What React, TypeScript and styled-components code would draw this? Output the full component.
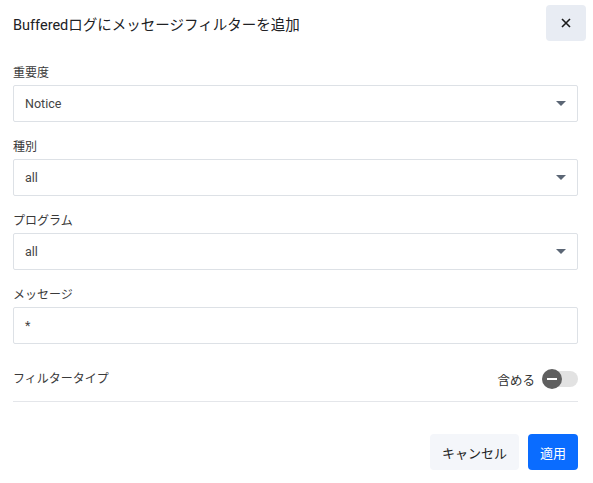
import React, { useState } from "react";
import styled, { createGlobalStyle } from "styled-components";

const GlobalStyle = createGlobalStyle`
  body {
    margin: 0;
    background: #ffffff;
    font-family: Roboto, "Noto Sans CJK JP", sans-serif;
    color: #212529;
  }
`;

const Dialog = styled.div`
  width: 593px;
  height: 483px;
  box-sizing: border-box;
  padding: 5px 15px 0 13px;
  display: flex;
  flex-direction: column;
`;

const Header = styled.div`
  display: flex;
  align-items: center;
  justify-content: space-between;
  height: 36px;
  margin-right: -8px;
`;

const Title = styled.h5`
  margin: 0;
  font-size: 14.5px;
  font-weight: 400;
  color: #202124;
`;

const CloseButton = styled.button`
  width: 40px;
  height: 36px;
  border: none;
  border-radius: 4px;
  background: #e8ecf3;
  display: flex;
  align-items: center;
  justify-content: center;
  padding: 0;
  color: #1a1a1a;
`;

const Body = styled.div`
  display: flex;
  flex-direction: column;
  gap: 17px;
  margin-top: 24px;
`;

const Field = styled.div`
  display: flex;
  flex-direction: column;
  gap: 4px;
`;

const Label = styled.label`
  font-size: 12px;
  color: #3a3a3a;
  line-height: 16px;
`;

const SelectBox = styled.div`
  height: 37px;
  box-sizing: border-box;
  border: 1px solid #dde1e6;
  border-radius: 2px;
  display: flex;
  align-items: center;
  justify-content: space-between;
  padding: 0 11px 0 11px;
  font-size: 12.5px;
  color: #444;
`;

const Caret = styled.span`
  width: 0;
  height: 0;
  border-left: 5px solid transparent;
  border-right: 5px solid transparent;
  border-top: 5px solid #5b6675;
`;

const TypeRow = styled.div`
  display: flex;
  align-items: center;
  justify-content: space-between;
  height: 40px;
  margin-top: 15px;
  border-bottom: 1px solid #e4e6ea;
  padding-bottom: 2px;
`;

const ToggleWrap = styled.div`
  display: flex;
  align-items: center;
  gap: 7px;
  font-size: 12.5px;
  color: #333;
`;

const Track = styled.div`
  position: relative;
  width: 36px;
  height: 16px;
  border-radius: 8px;
  background: #e2e2e2;
`;

const Knob = styled.div<{ $on: boolean }>`
  position: absolute;
  top: -2px;
  left: ${(p) => (p.$on ? "16px" : "0")};
  width: 20px;
  height: 20px;
  border-radius: 50%;
  background: #5f5f5f;
  display: flex;
  align-items: center;
  justify-content: center;
  &::after {
    content: "";
    width: 10px;
    height: 2px;
    background: #fff;
  }
`;

const Footer = styled.div`
  display: flex;
  justify-content: flex-end;
  gap: 9px;
  margin-top: 32px;
`;

const Button = styled.button<{ $primary?: boolean }>`
  height: 36px;
  padding: 0 12px;
  border: none;
  border-radius: 4px;
  font-family: inherit;
  font-size: 13px;
  background: ${(p) => (p.$primary ? "#0a6cff" : "#f4f6fa")};
  color: ${(p) => (p.$primary ? "#ffffff" : "#222")};
`;

const fields = [
  { label: "重要度", value: "Notice", select: true },
  { label: "種別", value: "all", select: true },
  { label: "プログラム", value: "all", select: true },
  { label: "メッセージ", value: "*", select: false },
];

export default function App() {
  const [on, setOn] = useState(false);
  return (
    <>
      <GlobalStyle />
      <Dialog>
        <Header>
          <Title>Bufferedログにメッセージフィルターを追加</Title>
          <CloseButton aria-label="close">
            <svg width="12" height="12" viewBox="0 0 12 12">
              <path d="M2 2 L10 10 M10 2 L2 10" stroke="currentColor" strokeWidth="1.6" />
            </svg>
          </CloseButton>
        </Header>
        <Body>
          {fields.map((f) => (
            <Field key={f.label}>
              <Label>{f.label}</Label>
              <SelectBox>
                <span>{f.value}</span>
                {f.select && <Caret />}
              </SelectBox>
            </Field>
          ))}
        </Body>
        <TypeRow>
          <Label>フィルタータイプ</Label>
          <ToggleWrap>
            含める
            <Track onClick={() => setOn(!on)}>
              <Knob $on={on} />
            </Track>
          </ToggleWrap>
        </TypeRow>
        <Footer>
          <Button>キャンセル</Button>
          <Button $primary>適用</Button>
        </Footer>
      </Dialog>
    </>
  );
}
